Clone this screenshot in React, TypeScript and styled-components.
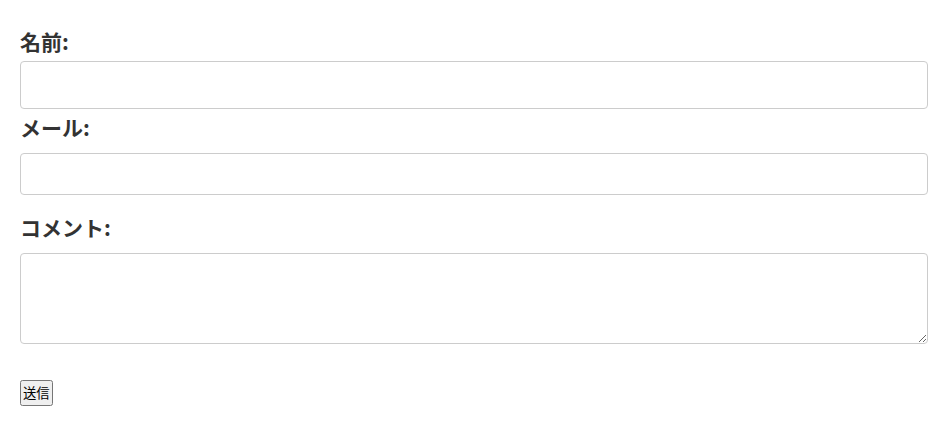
import React from "react";
import styled, { createGlobalStyle } from "styled-components";

const Global = createGlobalStyle`
  html, body { margin: 0; padding: 0; background: #fff; }
  body { font-family: "Noto Sans CJK JP", "Noto Sans", sans-serif; color: #333; }
`;

const Form = styled.form`
  display: flex;
  flex-direction: column;
  padding: 26px 24px 20px 20px;
`;

const Label = styled.label<{ $gap: number; $top: number }>`
  display: block;
  font-family: "Noto Sans CJK JP", "Noto Sans", sans-serif;
  font-weight: 700;
  font-size: 21px;
  line-height: 30px;
  color: #333;
  margin-top: ${(p) => p.$top}px;
  margin-bottom: ${(p) => p.$gap}px;
`;

const Input = styled.input<{ $h: number }>`
  box-sizing: border-box;
  width: 100%;
  height: ${(p) => p.$h}px;
  border: 1px solid #ccc;
  border-radius: 4px;
  padding: 8px 10px;
  font-size: 16px;
  background: #fff;
  outline: none;
`;

const TextArea = styled.textarea`
  box-sizing: border-box;
  width: 100%;
  height: 91px;
  border: 1px solid #ccc;
  border-radius: 4px;
  padding: 8px 10px;
  font-size: 16px;
  background: #fff;
  resize: both;
  display: block;
  outline: none;
`;

const Submit = styled.button`
  align-self: flex-start;
  margin: 36px 0 0 0;
  font-family: "Noto Sans CJK JP", sans-serif;
  font-size: 13.333px;
  line-height: 18px;
  padding: 2px 1px;
  color: #000;
`;

export default function App() {
  return (
    <>
      <Global />
      <Form onSubmit={(e) => e.preventDefault()}>
        <Label $top={0} $gap={5}>名前:</Label>
        <Input $h={48} type="text" />
        <Label $top={3} $gap={11}>メール:</Label>
        <Input $h={42} type="email" />
        <Label $top={17} $gap={11}>コメント:</Label>
        <TextArea />
        <Submit type="submit">送信</Submit>
      </Form>
    </>
  );
}
